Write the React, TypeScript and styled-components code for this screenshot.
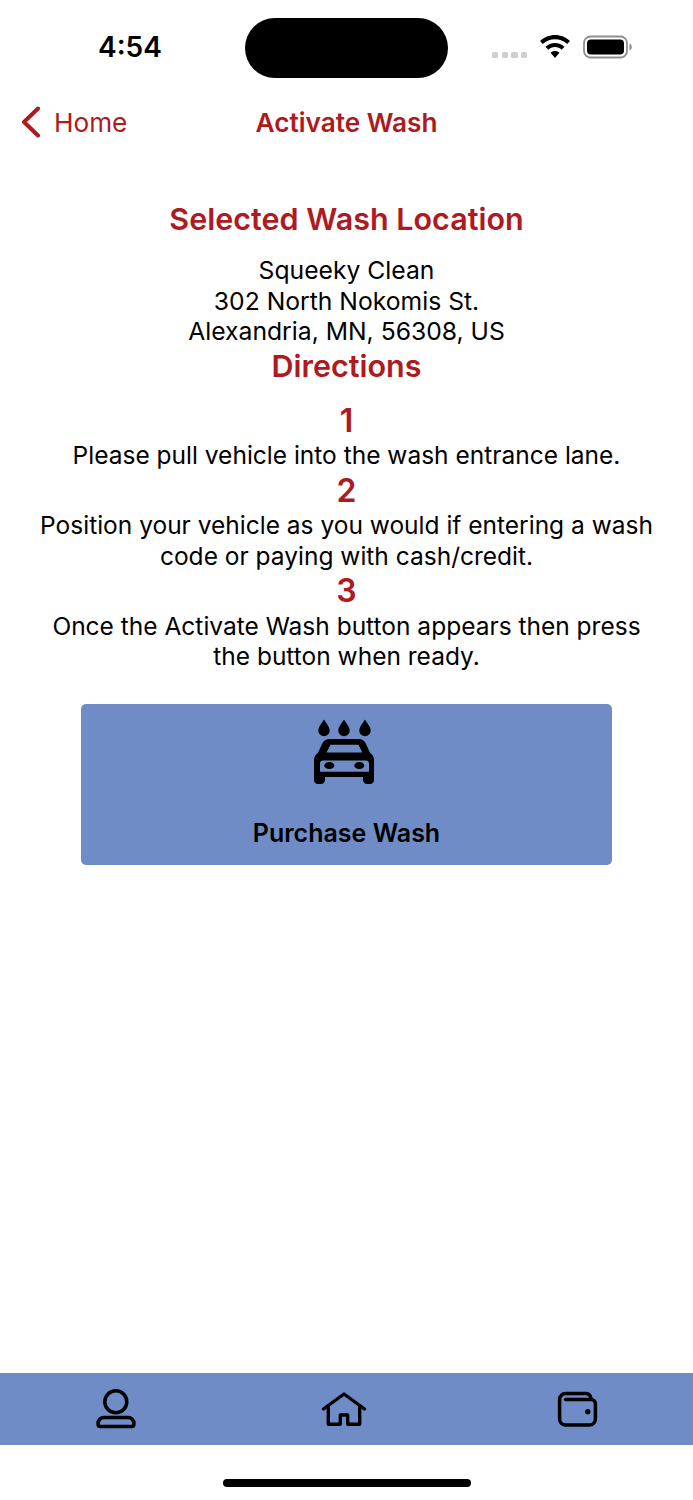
import React from "react";
import styled, { createGlobalStyle } from "styled-components";

const RED = "#ae1a20";
const BLUE = "#6f8cc7";

const GlobalStyle = createGlobalStyle`
  html, body {
    margin: 0;
    padding: 0;
    background: #fff;
  }
  * {
    box-sizing: border-box;
  }
`;

const Screen = styled.div`
  width: 693px;
  height: 1500px;
  display: flex;
  flex-direction: column;
  background: #fff;
  color: #000;
  font-family: Inter, "Liberation Sans", sans-serif;
  overflow: hidden;
`;

const StatusBar = styled.div`
  height: 91px;
  flex: none;
  display: flex;
  align-items: flex-start;
`;

const Clock = styled.div`
  width: 245px;
  padding: 29px 0 0 98px;
  font-size: 28px;
  line-height: 36px;
  font-weight: 600;
`;

const Island = styled.div`
  width: 203px;
  height: 60px;
  margin-top: 18px;
  border-radius: 30px;
  background: #000;
`;

const StatusIcons = styled.div`
  margin: 35px 0 0 44px;
  display: flex;
  align-items: flex-start;
`;

const SignalDots = styled.div`
  display: flex;
  gap: 3.3px;
  margin-top: 17px;
`;

const SignalDot = styled.span`
  width: 6.4px;
  height: 6.4px;
  border-radius: 1.5px;
  background: #cfcfcf;
`;

const WifiIcon = styled.svg`
  display: block;
  margin-left: 11.5px;
`;

const BatteryIcon = styled.svg`
  display: block;
  margin-left: 12px;
`;

const NavBar = styled.div`
  height: 62px;
  flex: none;
  display: grid;
  grid-template-columns: 1fr auto 1fr;
  align-items: center;
  color: ${RED};
  font-size: 26.2px;
`;

const BackLink = styled.div`
  display: flex;
  align-items: center;
  padding-left: 21px;
  gap: 13px;
`;

const NavTitle = styled.div`
  font-weight: 600;
`;

const Main = styled.main`
  flex: 1;
  padding-top: 47px;
  text-align: center;
  font-size: 24.5px;
  line-height: 30.5px;
`;

const Heading = styled.h1`
  margin: 0;
  font-size: 30.5px;
  line-height: 37px;
  font-weight: 600;
  color: ${RED};
`;

const Address = styled.div`
  margin-top: 18px;
  font-size: 24.7px;
`;

const Steps = styled.div`
  margin-top: 17px;
`;

const StepNumber = styled.div`
  font-size: 32px;
  line-height: 39.5px;
  font-weight: 600;
  color: ${RED};
`;

const StepText = styled.div`
  padding: 0 40px;
`;

const PurchaseButton = styled.button`
  display: flex;
  flex-direction: column;
  align-items: center;
  width: 531px;
  height: 161px;
  margin: 32px auto 0;
  padding: 12px 0 0;
  border: 0;
  border-radius: 5px;
  background: ${BLUE};
  color: #000;
  font-family: inherit;
  font-size: 25px;
  line-height: 30px;
  font-weight: 600;
`;

const WashIcon = styled.svg`
  display: block;
  margin-left: -4px;
`;

const ButtonLabel = styled.span`
  margin-top: 30px;
`;

const TabBar = styled.nav`
  height: 72px;
  flex: none;
  display: grid;
  grid-template-columns: repeat(3, 1fr);
  align-items: center;
  justify-items: center;
  background: ${BLUE};
`;

const HomeTabIcon = styled.svg`
  margin-right: 5.4px;
`;

const HomeArea = styled.div`
  height: 55px;
  flex: none;
  display: flex;
  justify-content: center;
  padding-top: 34px;
`;

const HomeIndicator = styled.div`
  width: 248px;
  height: 8px;
  border-radius: 4px;
  background: #000;
`;

const Chevron = () => (
  <svg width="20" height="32" viewBox="0 0 20 32" fill="none">
    <path d="M17 2.5 3 16l14 13.5" stroke={RED} strokeWidth="4" strokeLinecap="round" strokeLinejoin="round" />
  </svg>
);

const Wifi = () => (
  <WifiIcon width="32" height="24" viewBox="0 0 32 24" fill="#000">
    <path d="M16 0c5.800 0 11.100 2.300 15 6l-2.800 3C25 6 20.700 4.200 16 4.200S7 6 3.800 9L1 6c3.900-3.700 9.200-6 15-6z" />
    <path d="M16 8c3.700 0 7 1.400 9.500 3.700l-2.800 3C20.900 13 18.600 12.100 16 12.100S11.100 13 9.300 14.700l-2.800-3C9 9.400 12.300 8 16 8z" />
    <path d="M16 16c1.700 0 3.300.7 4.400 1.700L16 23l-4.400-5.300c1.100-1 2.700-1.700 4.400-1.700z" />
  </WifiIcon>
);

const Battery = () => (
  <BatteryIcon width="49" height="24" viewBox="0 0 49 24" fill="none">
    <rect x="1" y="1.500" width="43" height="21" rx="6.500" stroke="#8e8e8e" strokeWidth="1.800" />
    <rect x="4" y="4.500" width="37" height="15" rx="4" fill="#000" />
    <path d="M46.500 8.500c1.500.5 2.300 2 2.300 3.500s-.8 3-2.300 3.500z" fill="#8e8e8e" />
  </BatteryIcon>
);

const CarWash = () => (
  <WashIcon width="70" height="72" viewBox="0 0 70 72" fill="#000">
    <path d="M14 3.500c2 3.500 5.700 7.300 5.700 11a5.700 5.700 0 0 1-11.400 0c0-3.700 3.700-7.500 5.700-11z" />
    <path d="M34 3.500c2 3.500 5.700 7.300 5.700 11a5.700 5.700 0 0 1-11.400 0c0-3.700 3.700-7.500 5.700-11z" />
    <path d="M55 3.500c2 3.500 5.700 7.300 5.700 11a5.700 5.700 0 0 1-11.400 0c0-3.700 3.700-7.500 5.700-11z" />
    <path
      fillRule="evenodd"
      d="M20 23h29c3 0 5.500 1.800 6.800 4.500l4.200 9.300c2.500 1.600 4 4.200 4 7.200V64c0 2.400-1.800 4-4 4h-3c-2.300 0-4-1.700-4-4v-3H15v3c0 2.300-1.700 4-4 4H8c-2.200 0-4-1.600-4-4V44c0-3 1.500-5.600 4-7.200l4.200-9.300C13.500 24.800 16 23 20 23zM20.500 28.800h28l3.800 7.700H16.500zM13 44.500h43c1.700 0 3 1.300 3 3v8.300H10v-8.300c0-1.700 1.300-3 3-3z"
    />
    <ellipse cx="19.300" cy="49.500" rx="5" ry="3.600" />
    <ellipse cx="49.300" cy="49.500" rx="5" ry="3.600" />
  </WashIcon>
);

const PersonIcon = () => (
  <svg width="44" height="44" viewBox="0 0 44 44" fill="none" stroke="#000" strokeWidth="3.500" strokeLinejoin="round">
    <circle cx="21.800" cy="14.700" r="11" />
    <path d="M10 30.500h24c3.300 0 6 2.700 6 6v.5c0 1.400-1.100 2.500-2.500 2.500h-31C5.100 39.500 4 38.400 4 37v-.5c0-3.300 2.700-6 6-6z" />
  </svg>
);

const HomeIcon = () => (
  <HomeTabIcon width="48" height="44" viewBox="0 0 48 44" fill="none" stroke="#000" strokeWidth="3.400" strokeLinecap="round" strokeLinejoin="round">
    <path d="M3.500 22 24 7l20.500 15" />
    <path d="M8.300 19v18.300h12V28h7.400v9.300h12V19" />
  </HomeTabIcon>
);

const WalletIcon = () => (
  <svg width="44" height="44" viewBox="0 0 44 44" fill="none" stroke="#000" strokeWidth="3.500" strokeLinecap="round" strokeLinejoin="round">
    <path d="M9.500 12.500H35c2.500 0 4.400 2 4.400 4.500v15c0 3.300-2.700 5.900-6 5.900H9.600c-3.300 0-6-2.600-6-5.900V12.500c0-3.300 2.700-6 6-6H30c2.500 0 4.500 1.900 5 5.500" />
    <circle cx="31.800" cy="24.700" r="2.700" fill="#000" stroke="none" />
  </svg>
);

export default function App() {
  return (
    <>
      <GlobalStyle />
      <Screen>
        <StatusBar>
          <Clock>4:54</Clock>
          <Island />
          <StatusIcons>
            <SignalDots>
              <SignalDot />
              <SignalDot />
              <SignalDot />
              <SignalDot />
            </SignalDots>
            <Wifi />
            <Battery />
          </StatusIcons>
        </StatusBar>
        <NavBar>
          <BackLink>
            <Chevron />
            <span>Home</span>
          </BackLink>
          <NavTitle>Activate Wash</NavTitle>
        </NavBar>
        <Main>
          <Heading>Selected Wash Location</Heading>
          <Address>
            Squeeky Clean
            <br />
            302 North Nokomis St.
            <br />
            Alexandria, MN, 56308, US
          </Address>
          <Heading>Directions</Heading>
          <Steps>
            <StepNumber>1</StepNumber>
            <StepText>Please pull vehicle into the wash entrance lane.</StepText>
            <StepNumber>2</StepNumber>
            <StepText>Position your vehicle as you would if entering a wash code or paying with cash/credit.</StepText>
            <StepNumber>3</StepNumber>
            <StepText>Once the Activate Wash button appears then press the button when ready.</StepText>
          </Steps>
          <PurchaseButton>
            <CarWash />
            <ButtonLabel>Purchase Wash</ButtonLabel>
          </PurchaseButton>
        </Main>
        <TabBar>
          <PersonIcon />
          <HomeIcon />
          <WalletIcon />
        </TabBar>
        <HomeArea>
          <HomeIndicator />
        </HomeArea>
      </Screen>
    </>
  );
}
